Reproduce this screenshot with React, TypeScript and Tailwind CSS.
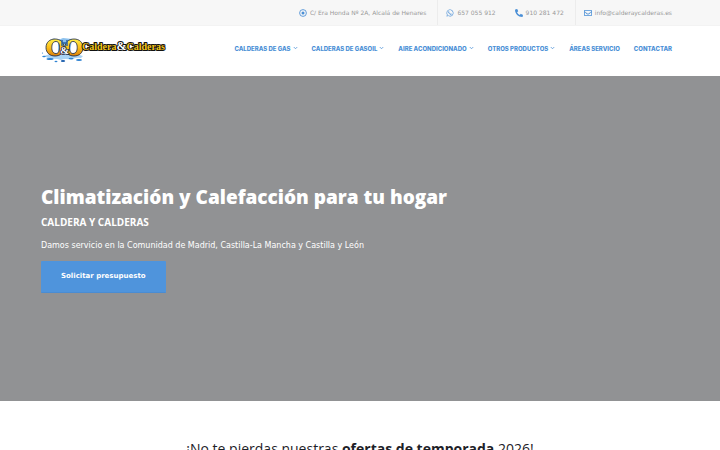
import type { ReactNode } from 'react';
import { FaPhoneAlt, FaRegEnvelope, FaWhatsapp } from 'react-icons/fa';

const navItems = [
    { label: 'CALDERAS DE GAS', hasMenu: true },
    { label: 'CALDERAS DE GASOIL', hasMenu: true },
    { label: 'AIRE ACONDICIONADO', hasMenu: true },
    { label: 'OTROS PRODUCTOS', hasMenu: true },
    { label: 'ÁREAS SERVICIO', hasMenu: false },
    { label: 'CONTACTAR', hasMenu: false },
];

export default function App() {
    return (
        <div className="min-h-screen bg-white font-['DejaVu_Sans',sans-serif]">
            <TopBar />
            <Header />
            <main>
                <Hero />
                <section className="px-4 pt-9 text-center">
                    <h2 className="font-['Open_Sans',sans-serif] text-[14px] leading-6 font-medium text-[#1d2127]">
                        ¡No te pierdas nuestras <strong className="font-bold">ofertas de temporada</strong> 2026!
                    </h2>
                </section>
            </main>
        </div>
    );
}

function TopBar() {
    return (
        <div className="flex h-[26px] justify-end border-b border-[#f3f3f3] bg-[#f7f7f7] pr-12 pl-[41px] text-[6px] text-[#999999]">
            <ContactItem icon={<TargetIcon />}>
                <span>C/ Era Honda Nº 2A, Alcalá de Henares</span>
            </ContactItem>
            <ContactItem icon={<FaWhatsapp className="size-2" />} divided>
                <a href="tel:657055912">657 055 912</a>
            </ContactItem>
            <ContactItem icon={<FaPhoneAlt className="size-2" />}>
                <a href="tel:910281472">910 281 472</a>
            </ContactItem>
            <ContactItem icon={<FaRegEnvelope className="size-2" />} divided last>
                <a href="mailto:info@calderaycalderas.es">info@calderaycalderas.es</a>
            </ContactItem>
        </div>
    );
}

function ContactItem({
    icon,
    divided,
    last,
    children,
}: {
    icon: ReactNode;
    divided?: boolean;
    last?: boolean;
    children: ReactNode;
}) {
    return (
        <div
            className={`flex items-center gap-[3px] whitespace-nowrap pl-2 ${last ? '' : 'pr-[11px]'} ${
                divided ? 'border-l border-[#ececec]' : ''
            }`}
        >
            <span className="text-[#4a8fd6]">{icon}</span>
            {children}
        </div>
    );
}

function TargetIcon() {
    return (
        <svg className="size-2" viewBox="0 0 16 16" fill="none" aria-hidden="true">
            <circle cx="8" cy="8" r="6.8" stroke="currentColor" strokeWidth="1.7" />
            <circle cx="8" cy="8" r="3" fill="currentColor" />
        </svg>
    );
}

function Header() {
    return (
        <header className="flex h-[50px] items-center justify-between pr-12 pl-[41px]">
            <a href="#" aria-label="Caldera y Calderas">
                <Logo />
            </a>
            <nav className="mb-[6px] flex gap-[14px]">
                {navItems.map((item) => (
                    <a
                        key={item.label}
                        href="#"
                        className="flex items-center gap-[2px] whitespace-nowrap font-['Inter',sans-serif] text-[6px] font-extrabold text-[#4a8fd6]"
                    >
                        {item.label}
                        {item.hasMenu && <Chevron />}
                    </a>
                ))}
            </nav>
        </header>
    );
}

function Chevron() {
    return (
        <svg className="h-1 w-[5px]" viewBox="0 0 10 8" fill="none" aria-hidden="true">
            <path d="M1.5 2 L5 5.5 L8.5 2" stroke="currentColor" strokeWidth="1.5" />
        </svg>
    );
}

function Logo() {
    return (
        <svg className="h-[26px] w-[126px]" viewBox="0 0 126 26" aria-hidden="true">
            <defs>
                <linearGradient id="gold" x1="0" y1="0" x2="0" y2="1">
                    <stop offset="0" stopColor="#fff04a" />
                    <stop offset="0.5" stopColor="#fbbf1c" />
                    <stop offset="1" stopColor="#dd7f08" />
                </linearGradient>
            </defs>
            {/* water */}
            <path
                d="M3 18 Q12 14 20 17 Q30 13 42 18 L40 20 Q34 19 31 22 Q24 20 20 22 Q14 20 9 21 Z"
                fill="#a9d3f4"
            />
            <g fill="#2f83d2">
                <ellipse cx="3" cy="18.5" rx="1.8" ry="0.8" />
                <ellipse cx="9" cy="21" rx="3.5" ry="1" />
                <ellipse cx="22" cy="23" rx="2.2" ry="1.1" fill="#1c5fae" />
                <ellipse cx="38" cy="22" rx="3" ry="1" />
                <ellipse cx="15" cy="23.5" rx="1.5" ry="0.7" />
                <ellipse cx="30" cy="20.5" rx="2.5" ry="0.8" />
                <circle cx="1.5" cy="15" r="0.6" />
                <circle cx="13" cy="1.2" r="0.6" />
            </g>
            {/* rings */}
            <path d="M17 2 L22 0 L31 1 L29 15 L17 16 Z" fill="#8cc1ee" />
            <g fillRule="evenodd" fill="url(#gold)" stroke="#15213d" strokeWidth="0.8">
                <path d="M14 1 C8.5 1 5 4.5 5 9.5 C5 14.5 8.5 18 14 18 C19.5 18 23 14.5 23 9.5 C23 4.5 19.5 1 14 1 Z M15 3.5 C17.5 3.5 18.5 6 18.5 9.5 C18.5 13 17.5 15.5 15 15.5 C12 15.5 10.8 13 10.8 9.5 C10.8 6 12 3.5 15 3.5 Z" />
                <path d="M33 1 C27.5 1 24 4.5 24 9.5 C24 14.5 27.5 18 33 18 C38.5 18 42 14.5 42 9.5 C42 4.5 38.5 1 33 1 Z M32 3.5 C35 3.5 36.2 6 36.2 9.5 C36.2 13 35 15.5 32 15.5 C29.5 15.5 28.5 13 28.5 9.5 C28.5 6 29.5 3.5 32 3.5 Z" />
            </g>
            <path d="M21 2 V8 M26 2 V8 M21 5 H26" stroke="#2a62a3" strokeWidth="1.5" fill="none" />
            <g fontFamily="'Liberation Serif', serif" fontWeight="bold" strokeLinejoin="round" paintOrder="stroke">
                <text x="19" y="16" fontSize="11" fill="#ffffff" stroke="#15213d" strokeWidth="1.6">
                    &amp;
                </text>
                <text x="41" y="12" fontSize="10" fill="#f5c518" stroke="#111111" strokeWidth="2">
                    Caldera
                    <tspan fontSize="12" fill="#ffffff">
                        &amp;
                    </tspan>
                    Calderas
                </text>
            </g>
        </svg>
    );
}

function Hero() {
    return (
        <section className="flex min-h-[325px] items-center bg-[#919294] pr-12 pl-[41px] text-white">
            <div>
                <h1 className="font-['Open_Sans',sans-serif] text-[19px] leading-[26px] font-extrabold">
                    Climatización y Calefacción para tu hogar
                </h1>
                <p className="mt-1 font-['Open_Sans',sans-serif] text-[10px] leading-4 font-bold">CALDERA Y CALDERAS</p>
                <p className="mt-2 text-[8px] leading-4">
                    Damos servicio en la Comunidad de Madrid, Castilla-La Mancha y Castilla y León
                </p>
                <button
                    type="button"
                    className="mt-[7px] block h-8 rounded-[1px] border-b border-[#4a8cd2] bg-[#4f94dc] px-5 text-[7px] font-bold"
                >
                    Solicitar presupuesto
                </button>
            </div>
        </section>
    );
}
